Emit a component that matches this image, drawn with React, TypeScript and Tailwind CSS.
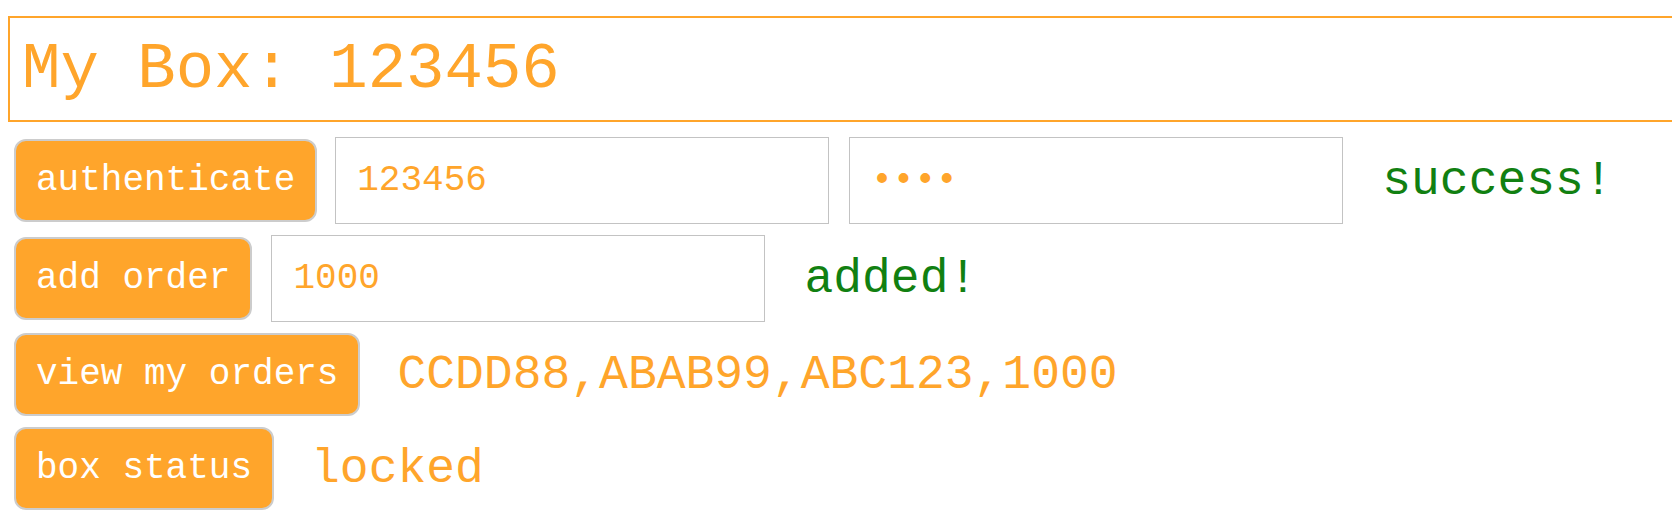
import React from "react";

const mono = { fontFamily: '"Liberation Mono", "Courier New", monospace' };

function Btn({ children }: { children: React.ReactNode }) {
  return (
    <button
      className="shrink-0 rounded-[12px] border-2 border-[#cccccc] bg-[#ffa52b] px-[20px] py-[19px] text-[36px] leading-[41px] text-white"
      style={mono}
    >
      {children}
    </button>
  );
}

function Field({ value, type = "text", shifted = false }: { value: string; type?: string; shifted?: boolean }) {
  return (
    <input
      type={type}
      defaultValue={value}
      className={
        shifted
          ? "ml-[2px] h-[87px] w-[494px] shrink-0 border border-[#c3c3c3] bg-white px-[21px] text-[36px] text-[#ffa52b] outline-none"
          : "h-[87px] w-[494px] shrink-0 border border-[#c3c3c3] bg-white px-[21px] text-[36px] text-[#ffa52b] outline-none"
      }
      style={mono}
    />
  );
}

export default function App() {
  return (
    <div className="h-[524px] w-full overflow-hidden bg-white" style={mono}>
      <div className="pt-[16px] pl-[8px]">
        <div className="box-border h-[106px] w-[calc(100%+40px)] border-2 border-[#ffa52b] pl-[12px] pt-[16px] text-[64px] leading-[73px] text-[#ffa52b]">
          My Box: 123456
        </div>
      </div>
      <div className="flex flex-col gap-[11px] pl-[14px] pt-[15px]">
        <div className="flex items-center gap-[18px]">
          <Btn>authenticate</Btn>
          <Field value="123456" />
          <Field value="1234" type="password" shifted />
          <span className="ml-[21px] text-[48px] text-[#118011]">success!</span>
        </div>
        <div className="flex items-center gap-[19px]">
          <Btn>add order</Btn>
          <Field value="1000" />
          <span className="ml-[20px] text-[48px] text-[#118011]">added!</span>
        </div>
        <div className="flex items-center gap-[20px]">
          <Btn>view my orders</Btn>
          <span className="ml-[17px] text-[48px] text-[#ffa52b]">CCDD88,ABAB99,ABC123,1000</span>
        </div>
        <div className="flex items-center gap-[20px]">
          <Btn>box status</Btn>
          <span className="ml-[17px] text-[48px] text-[#ffa52b]">locked</span>
        </div>
      </div>
    </div>
  );
}
